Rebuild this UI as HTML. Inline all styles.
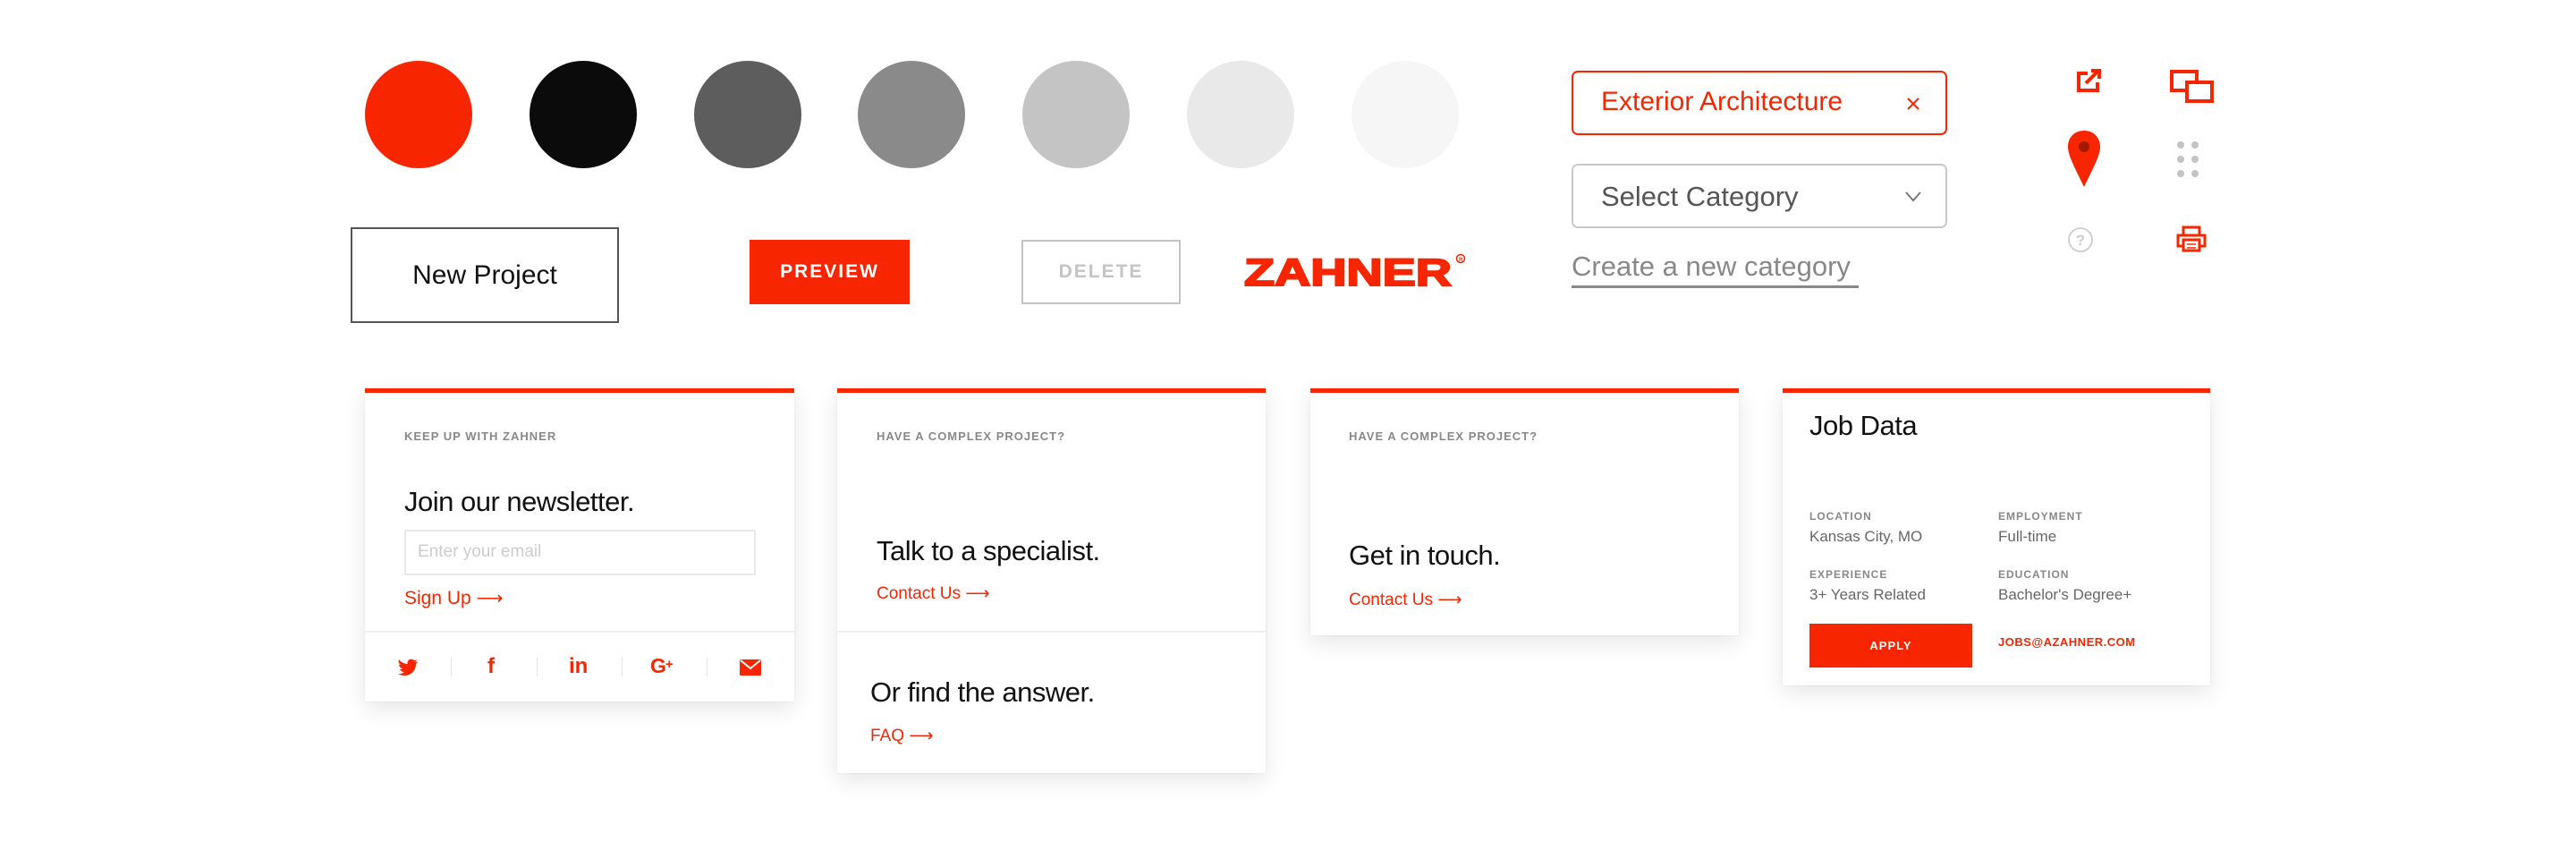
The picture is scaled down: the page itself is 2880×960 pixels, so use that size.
<!DOCTYPE html>
<html><head><meta charset="utf-8"><style>
*{margin:0;padding:0;box-sizing:border-box}
body{width:2880px;height:960px;background:#fff;position:relative;overflow:hidden;font-family:"Liberation Sans",sans-serif}
.a{position:absolute}
.c{position:absolute;width:120px;height:120px;border-radius:50%;top:68px}
.card{position:absolute;background:#fff;border-top:5px solid #f72500;box-shadow:0 8px 24px rgba(0,0,0,0.10),0 0 2px rgba(0,0,0,0.08)}
.lbl{position:absolute;font-size:13px;font-weight:bold;color:#888;letter-spacing:1px;white-space:nowrap}
.h{position:absolute;font-size:31px;color:#111;white-space:nowrap;letter-spacing:-0.5px}
.lnk{position:absolute;font-size:19px;color:#f72500;white-space:nowrap}
.sm{position:absolute;font-size:12px;font-weight:bold;color:#888;letter-spacing:1px}
.val{position:absolute;font-size:17px;color:#666;white-space:nowrap}
</style></head><body>
<div class="c" style="left:408px;background:#f72500"></div>
<div class="c" style="left:592px;background:#0b0b0b"></div>
<div class="c" style="left:776px;background:#5d5d5d"></div>
<div class="c" style="left:959px;background:#8a8a8a"></div>
<div class="c" style="left:1143px;background:#c4c4c4"></div>
<div class="c" style="left:1327px;background:#e9e9e9"></div>
<div class="c" style="left:1511px;background:#f6f6f6"></div>

<div class="a" style="left:392px;top:254px;width:300px;height:107px;border:2px solid #555;display:flex;align-items:center;justify-content:center;font-size:30px;color:#111">New Project</div>
<div class="a" style="left:838px;top:268px;width:179px;height:72px;background:#f72500;color:#fff;font-weight:bold;font-size:21px;letter-spacing:2px;display:flex;align-items:center;justify-content:center">PREVIEW</div>
<div class="a" style="left:1142px;top:268px;width:178px;height:72px;border:2px solid #c4c4c4;color:#c4c4c4;font-weight:bold;font-size:21px;letter-spacing:2px;display:flex;align-items:center;justify-content:center">DELETE</div>
<svg class="a" style="left:1390px;top:280px" width="254" height="44"><text x="1" y="39" font-family="Liberation Sans" font-weight="bold" font-size="43" fill="#f72500" stroke="#f72500" stroke-width="2" textLength="232" lengthAdjust="spacingAndGlyphs">ZAHNER</text><circle cx="243" cy="9" r="4.5" fill="none" stroke="#f72500" stroke-width="1.5"/><text x="241" y="12" font-size="6" font-weight="bold" fill="#f72500" font-family="Liberation Sans">R</text></svg>

<div class="a" style="left:1757px;top:79px;width:420px;height:72px;border:2px solid #f72500;border-radius:7px"></div>
<div class="a" style="left:1790px;top:97px;font-size:30px;color:#f72500">Exterior Architecture</div>
<svg class="a" style="left:2131px;top:108px" width="16" height="16"><path d="M2 2 L14 14 M14 2 L2 14" stroke="#f72500" stroke-width="2"/></svg>
<div class="a" style="left:1757px;top:183px;width:420px;height:72px;border:2px solid #c8c8c8;border-radius:7px"></div>
<div class="a" style="left:1790px;top:202px;font-size:31px;color:#555">Select Category</div>
<svg class="a" style="left:2130px;top:214px" width="18" height="12"><path d="M1 1 L9 10 L17 1" fill="none" stroke="#777" stroke-width="2"/></svg>
<div class="a" style="left:1757px;top:280px;font-size:31px;color:#888;white-space:nowrap">Create a new category</div>
<div class="a" style="left:1757px;top:319px;width:321px;height:3px;background:#888"></div>

<svg class="a" style="left:2300px;top:70px" width="200" height="220">
<path d="M34 12 H24 V31 H45 V22" fill="none" stroke="#f72500" stroke-width="4"/>
<path d="M32 23 L45 10 M38 9 H47 V18" fill="none" stroke="#f72500" stroke-width="4"/>
<rect x="128" y="10" width="28" height="21" fill="none" stroke="#f72500" stroke-width="4"/>
<rect x="145" y="22" width="28" height="21" fill="#fff" stroke="#f72500" stroke-width="4"/>
<path d="M30 76 C19 76 12 84 12 94 C12 104 20 118 30 139 C40 118 48 104 48 94 C48 84 41 76 30 76 Z" fill="#f72500"/>
<circle cx="30" cy="94" r="6" fill="#a31a00"/>
<g fill="#c4c4c4"><circle cx="138" cy="92" r="4"/><circle cx="154" cy="92" r="4"/><circle cx="138" cy="108" r="4"/><circle cx="154" cy="108" r="4"/><circle cx="138" cy="124" r="4"/><circle cx="154" cy="124" r="4"/></g>
<circle cx="26" cy="198" r="13" fill="none" stroke="#ccc" stroke-width="1.8"/>
<text x="26" y="204" text-anchor="middle" font-size="17" font-weight="bold" fill="#ccc" font-family="Liberation Sans">?</text>
<path d="M141 193 V184 H159 V193" fill="none" stroke="#f72500" stroke-width="3"/>
<path d="M140 205 H135 V193 H165 V205 H160" fill="none" stroke="#f72500" stroke-width="3"/>
<rect x="141" y="198" width="18" height="12" fill="#fff" stroke="#f72500" stroke-width="3"/>
<path d="M145 203 H155 M145 207 H155" stroke="#f72500" stroke-width="1.5"/>
</svg>

<!-- card 1 -->
<div class="card" style="left:408px;top:434px;width:480px;height:350px"></div>
<div class="lbl" style="left:452px;top:480px">KEEP UP WITH ZAHNER</div>
<div class="h" style="left:452px;top:543px">Join our newsletter.</div>
<div class="a" style="left:452px;top:592px;width:393px;height:51px;border:2px solid #e8e8e8"></div>
<div class="a" style="left:467px;top:606px;font-size:19px;color:#ccc">Enter your email</div>
<div class="lnk" style="left:452px;top:656px;font-size:21px">Sign Up ⟶</div>
<div class="a" style="left:408px;top:705px;width:480px;height:2px;background:#eee"></div>
<div class="a" style="left:504px;top:735px;width:1px;height:21px;background:#e4e4e4"></div>
<div class="a" style="left:600px;top:735px;width:1px;height:21px;background:#e4e4e4"></div>
<div class="a" style="left:695px;top:735px;width:1px;height:21px;background:#e4e4e4"></div>
<div class="a" style="left:790px;top:735px;width:1px;height:21px;background:#e4e4e4"></div>
<svg class="a" style="left:444px;top:736px" width="24" height="20"><path d="M23 3 C22 4 21 4 20 4 C21 3 22 2 22 1 C21 2 20 2 19 2 C17 0 13 0 12 3 C11 5 12 6 12 6 C8 6 4 4 2 1 C1 3 2 6 4 7 C3 7 2 7 2 6 C2 9 4 11 6 11 C5 12 4 12 3 12 C4 14 6 15 8 15 C6 17 3 17 1 17 C10 22 21 17 21 6 C22 5 23 4 23 3Z" fill="#f72500"/></svg>
<div class="a" style="left:545px;top:731px;font-size:24px;font-weight:bold;color:#f72500">f</div>
<div class="a" style="left:636px;top:731px;font-size:24px;font-weight:bold;color:#f72500">in</div>
<div class="a" style="left:727px;top:731px;font-size:23px;font-weight:bold;color:#f72500;letter-spacing:-1px">G<span style="font-size:15px;vertical-align:5px">+</span></div>
<svg class="a" style="left:827px;top:737px" width="24" height="18"><rect x="0" y="0" width="24" height="18" rx="1.5" fill="#f72500"/><path d="M1 1 L12 10 L23 1" fill="none" stroke="#fff" stroke-width="2"/></svg>

<!-- card 2 -->
<div class="card" style="left:936px;top:434px;width:479px;height:430px"></div>
<div class="lbl" style="left:980px;top:480px">HAVE A COMPLEX PROJECT?</div>
<div class="h" style="left:980px;top:598px">Talk to a specialist.</div>
<div class="lnk" style="left:980px;top:652px">Contact Us ⟶</div>
<div class="a" style="left:936px;top:705px;width:479px;height:2px;background:#eee"></div>
<div class="h" style="left:973px;top:756px">Or find the answer.</div>
<div class="lnk" style="left:973px;top:811px">FAQ ⟶</div>

<!-- card 3 -->
<div class="card" style="left:1465px;top:434px;width:479px;height:276px"></div>
<div class="lbl" style="left:1508px;top:480px">HAVE A COMPLEX PROJECT?</div>
<div class="h" style="left:1508px;top:603px">Get in touch.</div>
<div class="lnk" style="left:1508px;top:659px">Contact Us ⟶</div>

<!-- card 4 -->
<div class="card" style="left:1993px;top:434px;width:478px;height:332px"></div>
<div class="h" style="left:2023px;top:458px">Job Data</div>
<div class="sm" style="left:2023px;top:570px">LOCATION</div>
<div class="val" style="left:2023px;top:590px">Kansas City, MO</div>
<div class="sm" style="left:2234px;top:570px">EMPLOYMENT</div>
<div class="val" style="left:2234px;top:590px">Full-time</div>
<div class="sm" style="left:2023px;top:635px">EXPERIENCE</div>
<div class="val" style="left:2023px;top:655px">3+ Years Related</div>
<div class="sm" style="left:2234px;top:635px">EDUCATION</div>
<div class="val" style="left:2234px;top:655px">Bachelor's Degree+</div>
<div class="a" style="left:2023px;top:697px;width:182px;height:49px;background:#f72500;color:#fff;font-size:13px;font-weight:bold;letter-spacing:1px;display:flex;align-items:center;justify-content:center">APPLY</div>
<div class="a" style="left:2234px;top:710px;font-size:13px;font-weight:bold;color:#f72500;letter-spacing:0.5px">JOBS@AZAHNER.COM</div>
</body></html>
